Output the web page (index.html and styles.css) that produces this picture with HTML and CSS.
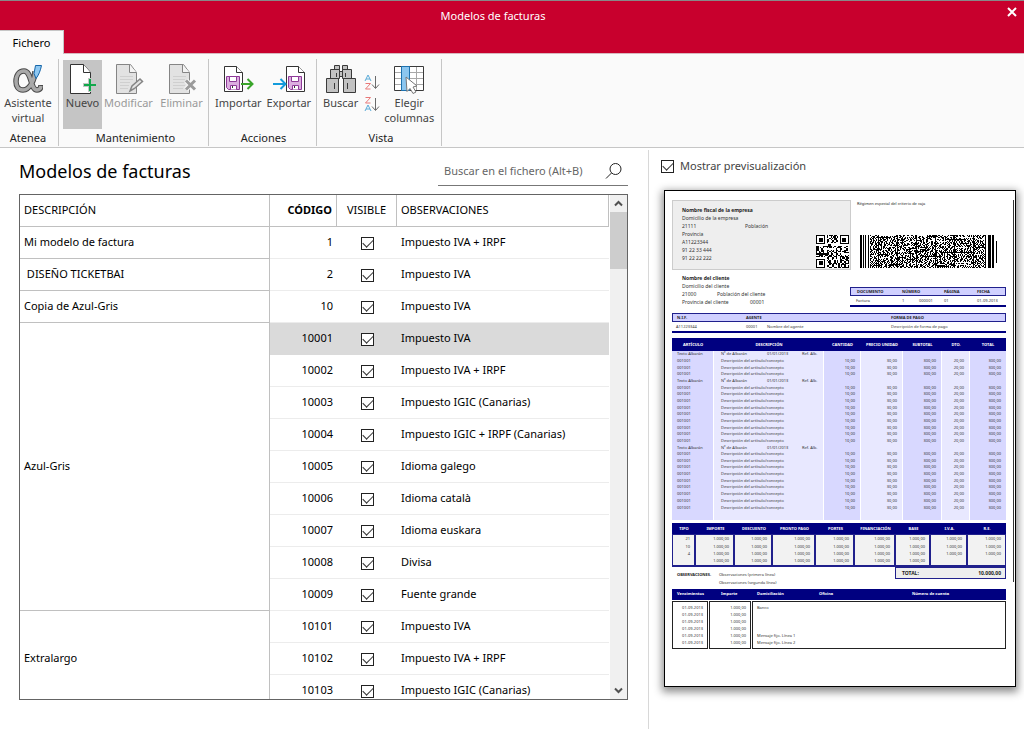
FILE: index.html
```html
<!DOCTYPE html>
<html lang="es">
<head>
<meta charset="utf-8">
<title>Modelos de facturas</title>
<link rel="stylesheet" href="styles.css">
</head>
<body>
<header class="titlebar">
  <div class="titlebar-row">
    <span class="titlebar-text">Modelos de facturas</span>
    <button class="close" aria-label="Cerrar"><svg width="10" height="10" viewBox="0 0 10 10"><path d="M1 1l8 8M9 1l-8 8" stroke="#fff" stroke-width="2"/></svg></button>
  </div>
  <nav class="tabs"><button class="tab">Fichero</button></nav>
</header>

<section class="ribbon">
  <div class="group group-atenea">
    <div class="tools">
      <button class="tool"><svg width="30" height="30" viewBox="0 0 30 30"><g fill="none"><path d="M22 7C22 15 17 26 10 26C5 26 3 22 3 17.500C3 11 6 7 11 7C19 7 17 26 24 26C26 26 28 25 28 21" stroke="#4a4a4a" stroke-width="5.500"/><path d="M22 7C22 15 17 26 10 26C5 26 3 22 3 17.500C3 11 6 7 11 7C19 7 17 26 24 26C26 26 27.500 25 28 22" stroke="#a9a9a9" stroke-width="3.500"/></g><path d="M22.500 1.500h6c-1 5-3 10-5.500 13l-2-5z" fill="#8ec8f2" stroke="#1565a8"/></svg><span>Asistente<br>virtual</span></button>
    </div>
    <h2 class="group-name">Atenea</h2>
  </div>
  <div class="group group-mant">
    <div class="tools">
      <button class="tool tool-active"><svg width="30" height="30" viewBox="0 0 30 30"><path d="M2.500 .5h13l7 8v21h-20z" fill="#fff" stroke="#333"/><path d="M15.500 .5v8h7" fill="#fff" stroke="#333"/><path d="M15 21h14M22 14v14" stroke="#c5c5c5" stroke-width="4"/><path d="M16 21h12M22 15v12" stroke="#12a84b" stroke-width="2"/></svg><span>Nuevo</span></button>
      <button class="tool" disabled><svg width="30" height="30" viewBox="0 0 30 30"><path d="M2.500 .5h14l6 8v21h-20z" fill="#e2e2e2" stroke="#858585"/><path d="M15.500 .5v8h7" fill="#f4f4f4" stroke="#858585"/><path d="M6 12.500h13M6 15.500h13M6 18.500h10M6 21.500h9M6 24.500h8" stroke="#cfcfcf"/><path d="M16 27l2-5l8-7l2.500 2.500l-8 7z" fill="#e4e4e4" stroke="#858585" stroke-width="1.500"/></svg><span>Modificar</span></button>
      <button class="tool" disabled><svg width="30" height="30" viewBox="0 0 30 30"><path d="M2.500 .5h14l6 8v21h-20z" fill="#e2e2e2" stroke="#858585"/><path d="M15.500 .5v8h7" fill="#f4f4f4" stroke="#858585"/><path d="M6 12.500h13M6 15.500h12M6 18.500h12M6 21.500h12M6 24.500h10" stroke="#cfcfcf"/><path d="M19 16.500l9 9M28 16.500l-9 9" stroke="#fafafa" stroke-width="5"/><path d="M19 16.500l9 9M28 16.500l-9 9" stroke="#9b9b9b" stroke-width="3"/></svg><span>Eliminar</span></button>
    </div>
    <h2 class="group-name">Mantenimiento</h2>
  </div>
  <div class="group group-acc">
    <div class="tools">
      <button class="tool"><svg width="32" height="30" viewBox="0 0 32 30"><path d="M2.500 2.500h12l6 6v19h-18z" fill="#fff" stroke="#333"/><path d="M14.500 2.500v6h6" fill="#fff" stroke="#333"/><path d="M4.500 12.500h13v13h-11l-2-2z" fill="#dcaee0" stroke="#8e3a98"/><path d="M7.500 12.500h7v5h-7zM8.500 25.500v-4h6v4" fill="#fff" stroke="#8e3a98"/><path d="M10.500 22v2" stroke="#333"/><path d="M19 20h11M25.500 15l5 5l-5 5" fill="none" stroke="#3aa52a" stroke-width="2"/></svg><span>Importar</span></button>
      <button class="tool"><svg width="34" height="30" viewBox="0 0 34 30"><path d="M14.500 2.500h12l6 6v19h-18z" fill="#fff" stroke="#333"/><path d="M26.500 2.500v6h6" fill="#fff" stroke="#333"/><path d="M16.500 12.500h13v13h-11l-2-2z" fill="#dcaee0" stroke="#8e3a98"/><path d="M19.500 12.500h7v5h-7zM20.500 25.500v-4h6v4" fill="#fff" stroke="#8e3a98"/><path d="M22.500 22v2" stroke="#333"/><path d="M1 20h12M8.500 15l5 5l-5 5" fill="none" stroke="#139bdb" stroke-width="2"/></svg><span>Exportar</span></button>
    </div>
    <h2 class="group-name">Acciones</h2>
  </div>
  <div class="group group-vista">
    <div class="tools">
      <button class="tool"><svg width="30" height="30" viewBox="0 0 30 30"><g fill="#c2c2c2" stroke="#3a3a3a"><path d="M8.500 1.500h5v4h-5zM16.500 1.500h5v4h-5zM4.500 5.500h9v9h-9zM16.500 5.500h9v9h-9zM.5 14.500h12v14h-12zM17.500 14.500h12v14h-12zM13.500 7.500h3v5h-3z"/><path d="M10.500 9v4M19.500 9v4M8.500 19v6M21.500 19v6"/></g></svg><span>Buscar</span></button>
      <div class="sorts">
        <button class="sort" aria-label="Orden ascendente"><svg width="16" height="16" viewBox="0 0 16 16" fill="none"><path d="M1 7l3-6l3 6M2 5h4" stroke="#5aabd8"/><path d="M1.500 9.500h5l-5 5.500h5" stroke="#e87878"/><path d="M11.500 2v12M8 10.500l3.500 4l3.500-4" stroke="#6a6a6a"/></svg></button>
        <button class="sort" aria-label="Orden descendente"><svg width="16" height="16" viewBox="0 0 16 16" fill="none"><path d="M1.500 1.500h5l-5 5.500h5" stroke="#e87878"/><path d="M1 15l3-6l3 6M2 13h4" stroke="#5aabd8"/><path d="M11.500 2v12M8 10.500l3.500 4l3.500-4" stroke="#6a6a6a"/></svg></button>
      </div>
      <button class="tool"><svg width="32" height="30" viewBox="0 0 32 30"><path d="M1.500 2.500h29v24h-29z" fill="#fff"/><path d="M1 8.500h30M1 14.500h30M1 20.500h30M16.500 2v24M23.500 2v24" stroke="#a8a8a8"/><path d="M1.500 2.500h29v24h-29z" fill="none" stroke="#3a3a3a"/><path d="M8.500 2.500h8v24h-8z" fill="#8cc6ef" stroke="#1c72b0"/><path d="M13 13l11 9l-4 1l3 5l-3 1.500l-3-5l-3 3z" fill="#fff" stroke="#777"/></svg><span>Elegir<br>columnas</span></button>
    </div>
    <h2 class="group-name">Vista</h2>
  </div>
</section>

<main class="workspace">
  <section class="list">
    <div class="list-head">
      <h1>Modelos de facturas</h1>
      <label class="search"><input type="search" placeholder="Buscar en el fichero (Alt+B)" aria-label="Buscar en el fichero"><svg width="18" height="18" viewBox="0 0 18 18" fill="none" stroke="#222"><circle cx="10.500" cy="7" r="5.500"/><path d="M6.500 11l-5.500 5.500"/></svg></label>
    </div>
    <div class="grid-box">
      <div class="grid-view">
        <table class="grid">
          <colgroup><col class="c-desc"><col class="c-code"><col class="c-vis"><col></colgroup>
          <thead><tr><th>DESCRIPCIÓN</th><th class="code sorted">CÓDIGO</th><th class="vis">VISIBLE</th><th class="obs">OBSERVACIONES</th></tr></thead>
          <tbody>
            <tr><td class="desc">Mi modelo de factura</td><td class="code">1</td><td class="vis"><input type="checkbox" aria-label="Visible 1" checked></td><td>Impuesto IVA + IRPF</td></tr>
            <tr><td class="desc">&nbsp;DISEÑO TICKETBAI</td><td class="code">2</td><td class="vis"><input type="checkbox" aria-label="Visible 2" checked></td><td>Impuesto IVA</td></tr>
            <tr><td class="desc">Copia de Azul-Gris</td><td class="code">10</td><td class="vis"><input type="checkbox" aria-label="Visible 10" checked></td><td>Impuesto IVA</td></tr>
            <tr class="selected"><td class="desc" rowspan="9">Azul-Gris</td><td class="code">10001</td><td class="vis"><input type="checkbox" aria-label="Visible 10001" checked></td><td>Impuesto IVA</td></tr>
            <tr><td class="code">10002</td><td class="vis"><input type="checkbox" aria-label="Visible 10002" checked></td><td>Impuesto IVA + IRPF</td></tr>
            <tr><td class="code">10003</td><td class="vis"><input type="checkbox" aria-label="Visible 10003" checked></td><td>Impuesto IGIC (Canarias)</td></tr>
            <tr><td class="code">10004</td><td class="vis"><input type="checkbox" aria-label="Visible 10004" checked></td><td>Impuesto IGIC + IRPF (Canarias)</td></tr>
            <tr><td class="code">10005</td><td class="vis"><input type="checkbox" aria-label="Visible 10005" checked></td><td>Idioma galego</td></tr>
            <tr><td class="code">10006</td><td class="vis"><input type="checkbox" aria-label="Visible 10006" checked></td><td>Idioma català</td></tr>
            <tr><td class="code">10007</td><td class="vis"><input type="checkbox" aria-label="Visible 10007" checked></td><td>Idioma euskara</td></tr>
            <tr><td class="code">10008</td><td class="vis"><input type="checkbox" aria-label="Visible 10008" checked></td><td>Divisa</td></tr>
            <tr><td class="code">10009</td><td class="vis"><input type="checkbox" aria-label="Visible 10009" checked></td><td>Fuente grande</td></tr>
            <tr><td class="desc" rowspan="3">Extralargo</td><td class="code">10101</td><td class="vis"><input type="checkbox" aria-label="Visible 10101" checked></td><td>Impuesto IVA</td></tr>
            <tr><td class="code">10102</td><td class="vis"><input type="checkbox" aria-label="Visible 10102" checked></td><td>Impuesto IVA + IRPF</td></tr>
            <tr><td class="code">10103</td><td class="vis"><input type="checkbox" aria-label="Visible 10103" checked></td><td>Impuesto IGIC (Canarias)</td></tr>
          </tbody>
        </table>
      </div>
      <div class="scrollbar">
        <button aria-label="Subir"><svg width="9" height="7" viewBox="0 0 9 7"><path d="M1 5.500l3.500-3.500l3.500 3.500" fill="none" stroke="#505050" stroke-width="2"/></svg></button>
        <div class="track"><div class="thumb"></div></div>
        <button aria-label="Bajar"><svg width="9" height="7" viewBox="0 0 9 7"><path d="M1 1.500l3.500 3.500l3.500-3.500" fill="none" stroke="#505050" stroke-width="2"/></svg></button>
      </div>
    </div>
  </section>

  <aside class="preview">
    <label class="show"><input type="checkbox" checked>Mostrar previsualización</label>
    <article class="paper">
      <div class="inv-top">
        <div class="company">
          <div>
            <b>Nombre fiscal de la empresa</b>
            <p>Domicilio de la empresa</p>
            <p class="pair"><span>21111</span><span>Población</span></p>
            <p>Provincia</p><p>A11223344</p><p>91 22 33 444</p><p>91 22 22 222</p>
          </div>
          <svg id="qr" class="qr" width="33" height="33" viewBox="0 0 25 25" shape-rendering="crispEdges"></svg>
        </div>
        <div class="regime">
          <p>Régimen especial del criterio de caja</p>
          <svg id="pdf417" class="barcode" width="138" height="33" viewBox="0 0 138 33" shape-rendering="crispEdges"></svg>
        </div>
      </div>
      <div class="inv-client">
        <div class="client">
          <b>Nombre del cliente</b>
          <p>Domicilio del cliente</p>
          <p class="cp"><span>21000</span><span>Población del cliente</span></p>
          <p class="prov"><span>Provincia del cliente</span><span>00001</span></p>
        </div>
        <table class="band doc">
          <colgroup><col class="d-doc"><col class="d-serie"><col class="d-num"><col class="d-pag"><col></colgroup>
          <thead><tr><th>DOCUMENTO</th><th colspan="2">NÚMERO</th><th>PÁGINA</th><th>FECHA</th></tr></thead>
          <tbody><tr><td>Factura</td><td>1</td><td>000001</td><td>01</td><td>01-09-2013</td></tr></tbody>
        </table>
      </div>
      <table class="band agent">
        <colgroup><col class="a-nif"><col class="a-code"><col class="a-name"><col></colgroup>
        <thead><tr><th>N.I.F.</th><th colspan="2">AGENTE</th><th>FORMA DE PAGO</th></tr></thead>
        <tbody><tr><td>A11223344</td><td>00001</td><td>Nombre del agente</td><td>Descripción de forma de pago</td></tr></tbody>
      </table>
      <table class="items">
        <colgroup><col class="i-art"><col><col class="i-cant"><col class="i-prec"><col class="i-sub"><col class="i-dto"><col class="i-tot"></colgroup>
        <thead><tr><th>ARTÍCULO</th><th>DESCRIPCIÓN</th><th>CANTIDAD</th><th>PRECIO UNIDAD</th><th>SUBTOTAL</th><th>DTO.</th><th>TOTAL</th></tr></thead>
        <tbody id="items"></tbody>
      </table>
      <table class="taxes">
        <colgroup><col class="t-tipo"><col class="t-imp"><col class="t-desc"><col class="t-pp"><col class="t-port"><col class="t-fin"><col class="t-base"><col class="t-iva"><col></colgroup>
        <thead><tr><th>TIPO</th><th>IMPORTE</th><th>DESCUENTO</th><th>PRONTO PAGO</th><th>PORTES</th><th>FINANCIACIÓN</th><th>BASE</th><th>I.V.A.</th><th>R.E.</th></tr></thead>
        <tbody id="taxes"></tbody>
      </table>
      <div class="inv-notes">
        <b>OBSERVACIONES.</b>
        <div><p>Observaciones (primera línea)</p><p>Observaciones (segunda línea)</p></div>
        <div class="total"><b>TOTAL:</b><b>10.000,00</b></div>
      </div>
      <div class="due-head"><b>Vencimientos</b><b>Importe</b><b>Domiciliación</b><b>Oficina</b><b>Número de cuenta</b></div>
      <div class="due">
        <div class="due-box"><p>01-09-2013</p><p>01-09-2013</p><p>01-09-2013</p><p>01-09-2013</p><p>01-09-2013</p><p>01-09-2013</p></div>
        <div class="due-box amounts"><p>1.000,00</p><p>1.000,00</p><p>1.000,00</p><p>1.000,00</p><p>1.000,00</p><p>1.000,00</p></div>
        <div class="due-box bank"><p>Banco</p><div><p>Mensaje fijo. Línea 1</p><p>Mensaje fijo. Línea 2</p></div></div>
      </div>
    </article>
  </aside>
</main>
<script src="script.js"></script>
</body>
</html>
```

FILE: styles.css
```css
* { box-sizing: border-box; }
body {
  margin: 0;
  height: 100vh;
  display: flex;
  flex-direction: column;
  overflow: hidden;
  background: #fff;
  color: #000;
  font: 12px/16px "Noto Sans", "Open Sans", sans-serif;
}
h1, h2, p { margin: 0; font-weight: 400; }
button { font: inherit; color: inherit; border: 0; padding: 0; background: none; }
svg { display: block; }
table { border-collapse: separate; border-spacing: 0; table-layout: fixed; width: 100%; }
th, td { padding: 0; text-align: left; font-weight: 400; }

/* Title bar */
.titlebar { background: #c8002d; border-top: 1px solid #888; }
.titlebar-row { height: 29px; position: relative; display: flex; align-items: center; justify-content: center; color: #fff; }
.titlebar-text { margin-right: 38px; font-size: 11px; }
.close { position: absolute; right: 7px; top: 6px; }
.tabs { display: flex; }
.tabs::after { content: ""; flex: 1; border-bottom: 1px solid #d8b8be; }
.tab { width: 64px; height: 24px; background: #fafafa; border-top: 1px solid #c6c6c6; border-right: 1px solid #c6c6c6; font-size: 11px; color: #000; }

/* Ribbon */
.ribbon { display: flex; height: 94px; flex: none; padding: 5px 0 1px; background: #fafafa; border-bottom: 1px solid #c6c6c6; }
.group { display: flex; flex-direction: column; justify-content: space-between; border-right: 1px solid #c6c6c6; }
.group-atenea { width: 59px; padding-right: 2px; }
.group-mant { width: 150px; padding-left: 4px; }
.group-acc { width: 108px; padding: 0 2px 0 4px; }
.group-vista { width: 125px; padding-left: 4px; }
.tools { display: flex; padding-top: 1px; }
.group-atenea .tools { justify-content: center; }
.tool { display: flex; flex-direction: column; align-items: center; height: 69px; padding: 4px 2px 0; font-size: 11px; line-height: 15px; color: #444; }
.tool span { margin-top: 1px; }
.group-mant .tool { min-width: 39px; }
.group-mant .tool:disabled { flex: 1; }
.group-acc .tool { flex: 1; }
.tool-active { background: #c5c5c5; }
.tool:disabled { color: #999; }
.sorts { display: flex; flex-direction: column; gap: 6px; padding: 14px 2px 0 4px; }
.group-name { font-size: 11px; line-height: 16px; text-align: center; color: #222; }

/* Workspace */
.workspace { flex: 1; min-height: 0; display: grid; grid-template-columns: minmax(0, 1fr) 375px; padding-top: 2px; }
.list { display: flex; flex-direction: column; min-height: 0; padding: 0 20px 29px 19px; border-right: 1px solid #d8d8d8; }
.list-head { display: flex; justify-content: space-between; height: 44px; padding-top: 5px; }
h1 { font-size: 18px; line-height: 32px; }
.search { display: flex; align-items: center; width: 190px; height: 31px; padding: 1px 5px 0 6px; border-bottom: 1px solid #777; }
.search input { flex: 1; min-width: 0; border: 0; padding: 0; outline: 0; background: none; font: inherit; font-size: 11px; color: #666; }
.search input::placeholder { color: #666; }
.grid-box { flex: 1; min-height: 0; display: flex; border: 1px solid #646464; }
.grid-view { flex: 1; overflow: hidden; }
.c-desc { width: 250px; }
.c-code { width: 67px; }
.c-vis { width: 60px; }
.grid th, .grid td { height: 32px; padding: 0 4px 1px; font-size: 11px; white-space: nowrap; }
.grid th { border-right: 1px solid #c0c0c0; border-bottom: 1px solid #c0c0c0; }
.grid td { border-bottom: 1px solid #ececec; }
.grid td.desc { border-right: 1px solid #c0c0c0; border-bottom-color: #c0c0c0; }
.grid .code { text-align: right; }
.grid .sorted { font-weight: 700; }
.grid .vis { text-align: center; }
.selected td:not(.desc) { background: #dadada; border-color: #dadada; }
input[type="checkbox"] { appearance: none; position: relative; flex: none; width: 13px; height: 13px; margin: 0; border: 1px solid #222; background: #fff; vertical-align: middle; }
input[type="checkbox"]::after { content: ""; position: absolute; left: 1px; top: 1px; width: 9px; height: 5px; border-left: 1px solid #333; border-bottom: 1px solid #333; transform: rotate(-45deg); }
.scrollbar { width: 17px; display: flex; flex-direction: column; margin-left: 1px; background: #f0f0f0; }
.scrollbar button { height: 17px; display: flex; align-items: center; justify-content: center; }
.track { flex: 1; }
.thumb { height: 57px; background: #cdcdcd; }

/* Preview */
.preview { padding: 8px 8px 0 15px; }
.show { display: flex; align-items: center; gap: 6px; height: 16px; margin-left: -3px; color: #444; font-size: 11px; }
.paper {
  height: 497px;
  margin-top: 16px;
  padding: 9px 9px 0 7px;
  border: 1px solid #000;
  background: linear-gradient(#333, #333) no-repeat right 1px top 9px / 1px 382px #fff;
  box-shadow: 0 3px 8px 2px rgba(0, 0, 0, .45);
  color: #333;
  font-size: 5px;
  line-height: 8px;
  white-space: nowrap;
}
.paper b { color: #222; font-weight: 700; }
.inv-top { display: flex; justify-content: space-between; height: 70px; }
.company { display: flex; justify-content: space-between; width: 179px; padding: 5px 1px 1px 9px; border: 1px solid #ccc; background: #eee; }
.company b, .client b { display: block; }
.pair { display: grid; grid-template-columns: 63px auto; }
.qr { align-self: flex-end; }
.regime { width: 149px; font-size: 4px; display: flex; flex-direction: column; gap: 27px; color: #222; }
.barcode { margin-left: 3px; }
.inv-client { display: flex; justify-content: space-between; padding: 4px 0 0 10px; height: 43px; }
.cp { display: grid; grid-template-columns: 35px auto; }
.prov { display: grid; grid-template-columns: 68px auto; }
.band { font-size: 4px; line-height: 6px; border-bottom: 2px solid #000080; }
.band th { height: 9px; background: #d0d0ff; border: solid #20208c; border-width: 1px 0; font-weight: 700; color: #222; }
.band th:first-child { border-left-width: 1px; }
.band th:last-child { border-right-width: 1px; }
.band td { height: 9px; }
.doc { width: 156px; height: 20px; margin-top: 13px; align-self: flex-start; }
.doc th:first-child, .doc td:first-child { padding-left: 6px; }
.d-doc { width: 52px; }
.d-serie { width: 17px; }
.d-num { width: 25px; }
.d-pag { width: 33px; }
.agent { height: 20px; }
.agent th:first-child, .agent td:first-child { padding-left: 4px; }
.a-nif { width: 74px; }
.a-code { width: 21px; }
.a-name { width: 124px; }
.items { height: 182px; margin-top: 5px; font-size: 4px; line-height: 6px; }
.items th, .taxes th { background: #000080; color: #fff; font-weight: 700; text-align: center; }
.items th { height: 13px; }
.items td { padding-right: 5px; text-align: right; background: #d8d8ff; border-right: 1px solid #fff; }
.items td:nth-child(even) { background: #e8e8ff; }
.items td:nth-child(1) { text-align: left; padding-left: 5px; }
.items td:nth-child(2) { text-align: left; padding-left: 7px; }
.items td:last-child { border-right: 0; }
.items .rest td { height: 9px; }
.albaran { display: grid; grid-template-columns: 46px 35px auto; }
.i-art { width: 42px; }
.i-cant { width: 37px; }
.i-prec { width: 42px; }
.i-sub { width: 39px; }
.i-dto { width: 28px; }
.i-tot { width: 36px; }
.taxes { margin-top: 3px; font-size: 4px; line-height: 6px; }
.taxes th { height: 11px; }
.taxes td { height: 7px; padding-right: 4px; text-align: right; background: #f2f2f2; border-right: 2px solid #20208c; }
.taxes td:first-child { border-left: 1px solid #20208c; }
.taxes td:last-child { border-right-width: 1px; }
.taxes tr:first-child td { height: 9px; border-top: 1px solid #20208c; }
.taxes tr:last-child td { height: 10px; border-bottom: 2px solid #20208c; }
.t-tipo { width: 24px; }
.t-imp { width: 39px; }
.t-desc { width: 38px; }
.t-pp { width: 43px; }
.t-port { width: 39px; }
.t-fin { width: 41px; }
.t-base { width: 35px; }
.t-iva { width: 37px; }
.inv-notes { display: grid; grid-template-columns: 42px 1fr 111px; align-items: start; height: 22px; padding-left: 5px; font-size: 4px; }
.inv-notes > b, .inv-notes > div:nth-child(2) { padding-top: 4px; }
.inv-notes .total { display: flex; justify-content: space-between; height: 12px; padding: 1px 4px 0 6px; border: 1px solid #20208c; background: #eee; font-size: 5px; }
.due-head { display: grid; grid-template-columns: 44px 36px 62px 93px auto; height: 11px; padding: 1px 0 0 5px; background: #000080; font-size: 4px; }
.due-head b { color: #fff; }
.due { display: grid; grid-template-columns: 36px 42px 1fr; gap: 1px; margin-top: 1px; font-size: 4px; line-height: 7px; }
.due-box { height: 48px; padding: 2px 4px; border: 1px solid #222; text-align: right; }
.due-box.bank { display: flex; flex-direction: column; justify-content: space-between; text-align: left; }
```

FILE: script.js
```js
// Invoice lines: "A" is a delivery-note heading, "L" an article line.
const lines = "ALLLALLLLLLLLLALLLLLLLLL";
document.getElementById("items").innerHTML = [...lines].map(kind => kind === "A"
  ? '<tr><td>Texto Albarán</td><td><div class="albaran"><span>Nº de Albarán</span><span>01/01/2013</span><span>Ref. Alb.</span></div></td><td></td><td></td><td></td><td></td><td></td></tr>'
  : "<tr><td>001001</td><td>Descripción del artículo/concepto</td><td>10,00</td><td>30,00</td><td>300,00</td><td>20,00</td><td>300,00</td></tr>"
).join("") + '<tr class="rest">' + "<td></td>".repeat(7) + "</tr>";

const money = "<td>1.000,00</td>";
document.getElementById("taxes").innerHTML = [["21", 8], ["10", 8], ["4", 8], ["", 6]].map(([rate, n]) =>
  "<tr><td>" + rate + "</td>" + money.repeat(n) + "<td></td>".repeat(8 - n) + "</tr>"
).join("");

// Fixed-seed generator, so that the codes are the same on every load.
let seed = 20130901;
function bit() {
  seed = (seed * 1103515245 + 12345) % 2147483648;
  return (seed >> 12) % 2;
}
const cell = (x, y, w, h) => "M" + x + " " + y + "h" + w + "v" + h + "h-" + w + "z";

// QR code: 25 modules with three finder squares.
let qr = "";
for (let y = 0; y < 25; y++) {
  for (let x = 0; x < 25; x++) {
    const finder = (x < 8 && y < 8) || (x > 16 && y < 8) || (x < 8 && y > 16);
    if (!finder && bit()) qr += cell(x, y, 1, 1);
  }
}
let rings = "";
for (const [x, y] of [[0, 0], [18, 0], [0, 18]]) {
  rings += cell(x, y, 7, 7) + cell(x + 1, y + 1, 5, 5) + cell(x + 2, y + 2, 3, 3);
}
document.getElementById("qr").innerHTML =
  '<path fill="#fff" d="M0 0h25v25h-25z"/><path d="' + qr + '"/><path fill-rule="evenodd" d="' + rings + '"/>';

// Stacked barcode with start and stop bars.
let bars = cell(0, 0, 2, 33) + cell(3, 0, 1, 33) + cell(5, 0, 1, 33) + cell(8, 0, 1, 33);
for (let y = 0; y < 33; y++) {
  for (let x = 10; x < 125; x++) if (bit()) bars += cell(x, y, 1, 1);
}
for (const x of [18, 37, 56, 75, 94, 113]) bars += cell(x, 0, 1, 33);
bars += cell(125, 0, 1, 33) + cell(128, 0, 3, 33) + cell(132, 0, 2, 33) + cell(136, 6, 1, 22);
document.getElementById("pdf417").innerHTML = '<path d="' + bars + '"/>';
```
